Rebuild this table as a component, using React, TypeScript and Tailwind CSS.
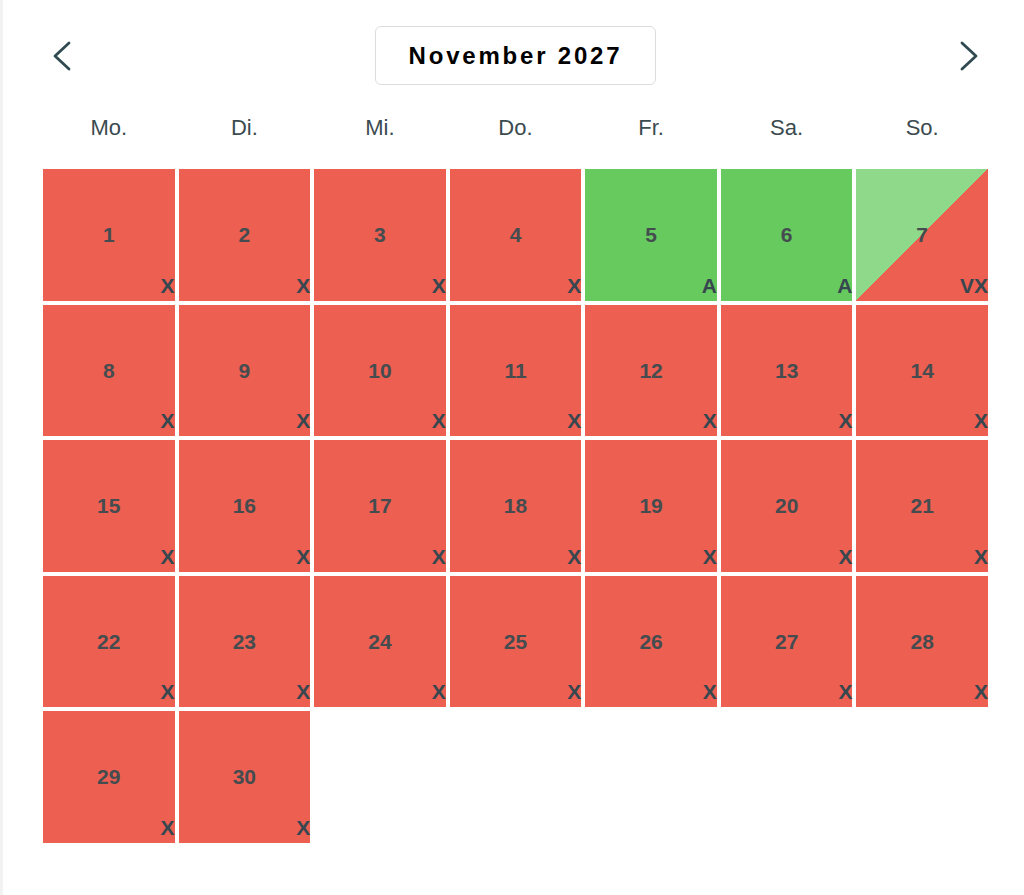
const WEEKDAYS = ['Mo.', 'Di.', 'Mi.', 'Do.', 'Fr.', 'Sa.', 'So.'];

type Day = { n: number; mark: string; kind: 'red' | 'green' | 'split' };

const days: Day[] = Array.from({ length: 30 }, (_, i) => {
  const n = i + 1;
  if (n === 5 || n === 6) return { n, mark: 'A', kind: 'green' };
  if (n === 7) return { n, mark: 'VX', kind: 'split' };
  return { n, mark: 'X', kind: 'red' };
});

function Chevron({ dir }: { dir: 'left' | 'right' }) {
  return (
    <svg width="20" height="30" viewBox="0 0 20 30" fill="none">
      <polyline
        points={dir === 'left' ? '17,2 3,15 17,28' : '3,2 17,15 3,28'}
        stroke="#2f4a50"
        strokeWidth="2.8"
        strokeLinecap="round"
        strokeLinejoin="round"
      />
    </svg>
  );
}

function DayCell({ day }: { day: Day }) {
  const bg =
    day.kind === 'green'
      ? 'bg-[#66ca5e]'
      : day.kind === 'split'
        ? 'bg-[linear-gradient(to_bottom_right,#8fd98a_50%,#ec5f51_50%)]'
        : 'bg-[#ec5f51]';
  return (
    <div className={`relative aspect-square flex items-center justify-center ${bg}`}>
      <span className="text-[21px] font-bold text-[#454c50]">{day.n}</span>
      <span className="absolute right-0 bottom-[5px] text-[21px] leading-none font-bold text-[#37474f]">
        {day.mark}
      </span>
    </div>
  );
}

export default function App() {
  return (
    <div className="flex min-h-[895px] bg-white font-['Liberation_Sans',Arial,sans-serif]">
      <div className="w-[3px] bg-[#f2f2f2]" />
      <div className="flex-1 pl-[40px] pr-[36px] pt-[26px]">
        {/* header */}
        <div className="flex h-[59px] items-center justify-between px-[9px]">
          <Chevron dir="left" />
          <div className="flex h-[59px] w-[281px] items-center justify-center rounded-md border-[1.5px] border-[#dcdcdc]">
            <span className="text-[24px] font-bold tracking-[2.8px] text-black">November 2027</span>
          </div>
          <Chevron dir="right" />
        </div>

        {/* weekdays */}
        <div className="grid h-[84px] grid-cols-7 items-center gap-1">
          {WEEKDAYS.map((w) => (
            <div key={w} className="text-center text-[22px] text-[#3b4b50]">
              {w}
            </div>
          ))}
        </div>

        {/* days */}
        <div className="grid grid-cols-7 gap-1">
          {days.map((d) => (
            <DayCell key={d.n} day={d} />
          ))}
        </div>
      </div>
    </div>
  );
}
